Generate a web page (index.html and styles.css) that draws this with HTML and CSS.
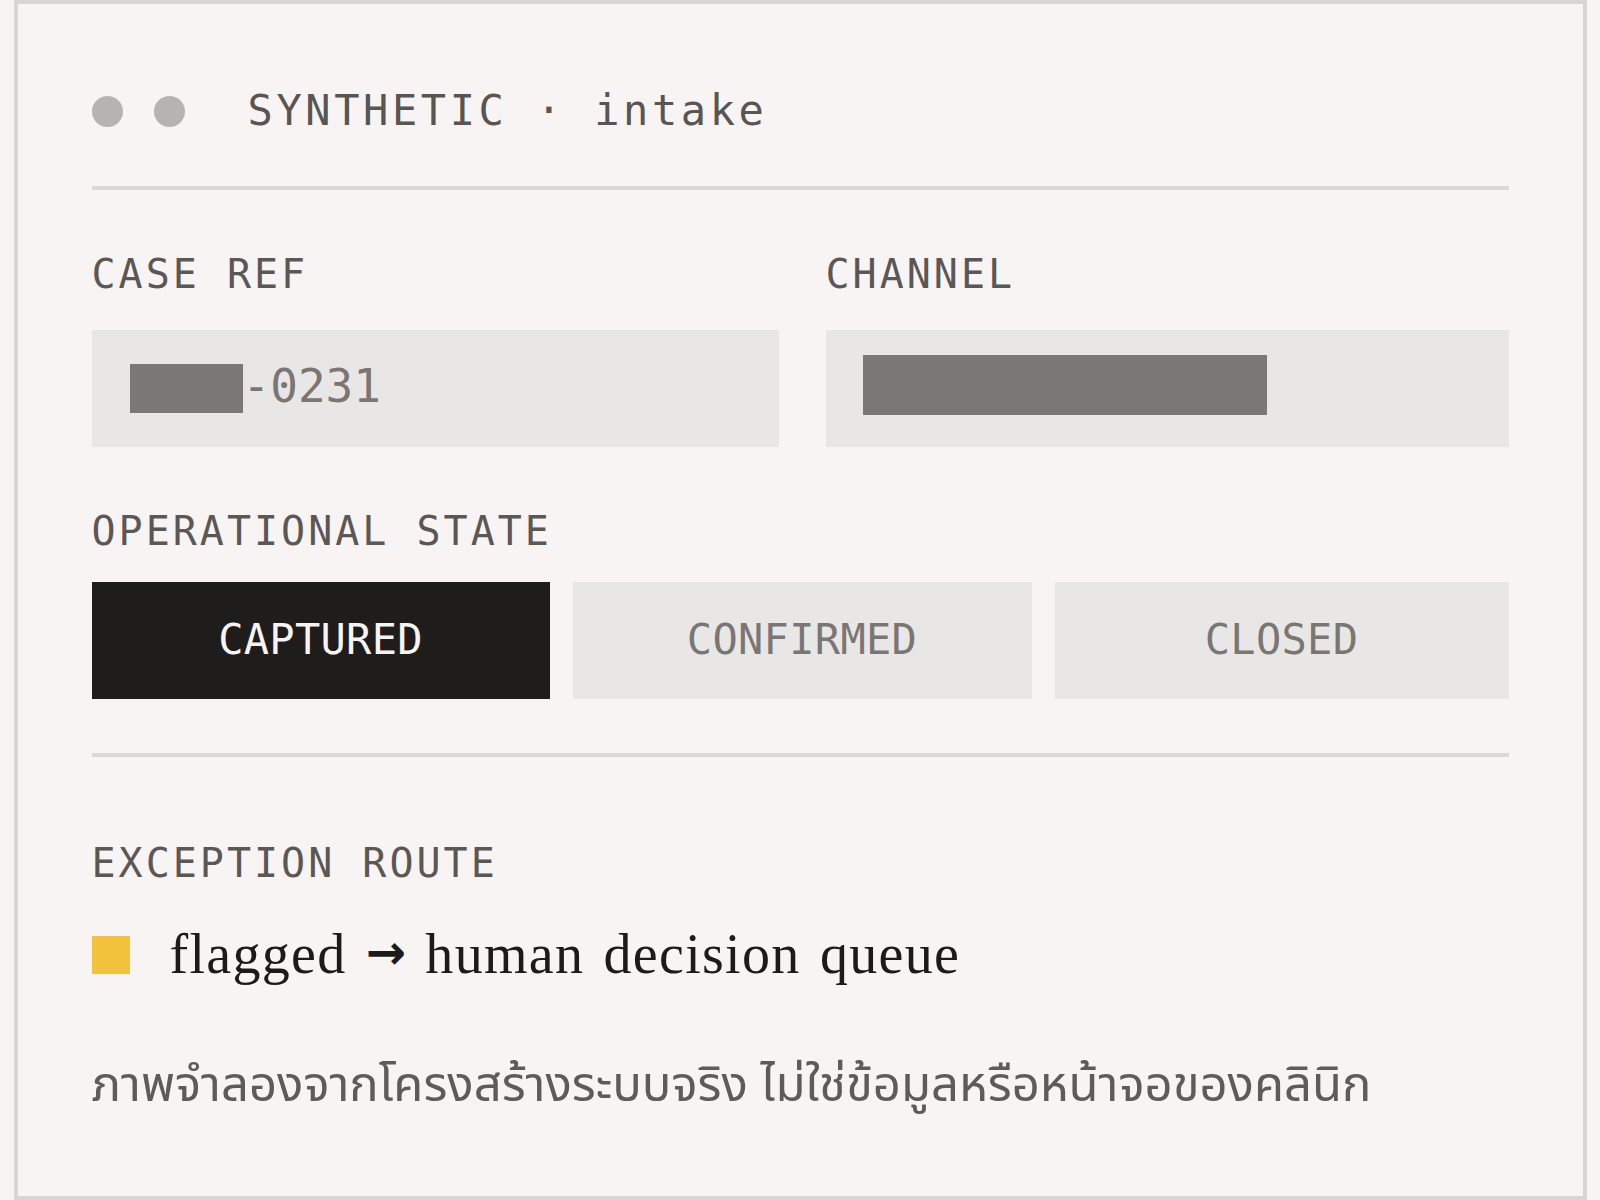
FILE: index.html
```html
<!DOCTYPE html>
<html lang="en">
<head>
<meta charset="utf-8">
<title>SYNTHETIC · intake</title>
<link rel="stylesheet" href="styles.css">
</head>
<body>
<main class="card">
  <header class="head">
    <span class="dot"></span>
    <span class="dot"></span>
    <span class="head-title">SYNTHETIC · intake</span>
  </header>
  <hr class="rule rule-top">

  <section class="fields">
    <div class="field">
      <div class="label">CASE REF</div>
      <div class="input">
        <span class="redact redact-short"></span><span class="value">-0231</span>
      </div>
    </div>
    <div class="field">
      <div class="label">CHANNEL</div>
      <div class="input">
        <span class="redact redact-long"></span>
      </div>
    </div>
  </section>

  <div class="label label-state">OPERATIONAL STATE</div>
  <div class="states">
    <div class="state state-active">CAPTURED</div>
    <div class="state">CONFIRMED</div>
    <div class="state">CLOSED</div>
  </div>

  <hr class="rule rule-mid">

  <div class="label label-route">EXCEPTION ROUTE</div>
  <div class="route">
    <span class="flag"></span>
    <span class="route-text">flagged <span class="arrow">→</span> human decision queue</span>
  </div>

  <p class="note" lang="th">ภาพจำลองจากโครงสร้างระบบจริง ไม่ใช่ข้อมูลหรือหน้าจอของคลินิก</p>
</main>
</body>
</html>
```
FILE: styles.css
```css
html, body {
  margin: 0;
  padding: 0;
  background: #f7f4f3;
}

.card {
  box-sizing: border-box;
  width: 1573px;
  height: 1200px;
  margin: 0 auto;
  border: 4px solid #d9d5d3;
  background: #f7f4f3;
  padding: 76px 74px 0 74px;
  display: flex;
  flex-direction: column;
  font-family: "DejaVu Sans Mono", "Liberation Mono", monospace;
  color: #5a5654;
}

.head {
  height: 62px;
  display: flex;
  align-items: center;
}

.dot {
  width: 31px;
  height: 31px;
  border-radius: 50%;
  background: #b6b4b2;
  margin-right: 31px;
}

.dot + .dot {
  margin-right: 63px;
}

.head-title {
  font-size: 42px;
  line-height: 42px;
  letter-spacing: 3.6px;
  color: #595553;
}

.rule {
  border: 0;
  margin: 0;
  height: 4px;
  background: #dcd8d6;
}

.rule-top {
  margin-top: 44px;
}

.fields {
  display: grid;
  grid-template-columns: 687px 1fr;
  column-gap: 47px;
  margin-top: 64px;
}

.label {
  font-size: 40px;
  line-height: 40px;
  letter-spacing: 3px;
  color: #5b5755;
}

.input {
  margin-top: 36px;
  height: 117px;
  background: #e9e7e5;
  display: flex;
  align-items: center;
  padding-left: 38px;
}

.redact {
  display: block;
  background: #7b7775;
}

.redact-short {
  width: 113px;
  height: 49px;
}

.redact-long {
  width: 404px;
  height: 60px;
  margin-top: -8px;
  margin-left: -1px;
}

.value {
  font-size: 46px;
  line-height: 46px;
  color: #7a7674;
  position: relative;
  top: -3px;
}

.label-state {
  margin-top: 64px;
}

.states {
  margin-top: 31px;
  display: grid;
  grid-template-columns: 458px 459px 1fr;
  column-gap: 23px;
}

.state {
  box-sizing: border-box;
  height: 117px;
  padding-bottom: 3px;
  display: flex;
  align-items: center;
  justify-content: center;
  background: #e9e7e5;
  color: #7a7674;
  font-size: 42px;
  letter-spacing: 0.3px;
}

.state-active {
  background: #1f1d1c;
  color: #f6f4f2;
}

.rule-mid {
  margin-top: 54px;
}

.label-route {
  margin-top: 86px;
}

.route {
  margin-top: 53px;
  display: flex;
  align-items: center;
  height: 38px;
}

.flag {
  width: 38px;
  height: 38px;
  background: #f2c23c;
  margin-right: 40px;
  flex: none;
}

.route-text {
  font-family: "Liberation Serif", "DejaVu Serif", serif;
  font-size: 56px;
  line-height: 56px;
  letter-spacing: 1.3px;
  word-spacing: 4px;
  color: #1d1b1a;
  white-space: nowrap;
}

.arrow {
  font-family: "DejaVu Sans", sans-serif;
  font-weight: bold;
  font-size: 48px;
  letter-spacing: 0;
  position: relative;
  top: -4px;
}

.note {
  margin: 83px 0 0 0;
  font-family: "Noto Sans Thai", "Noto Sans Thai UI", "IBM Plex Sans Thai", "Noto Sans", "DejaVu Sans", sans-serif;
  font-size: 49px;
  line-height: 58px;
  color: #5f5b59;
  white-space: nowrap;
}
```
